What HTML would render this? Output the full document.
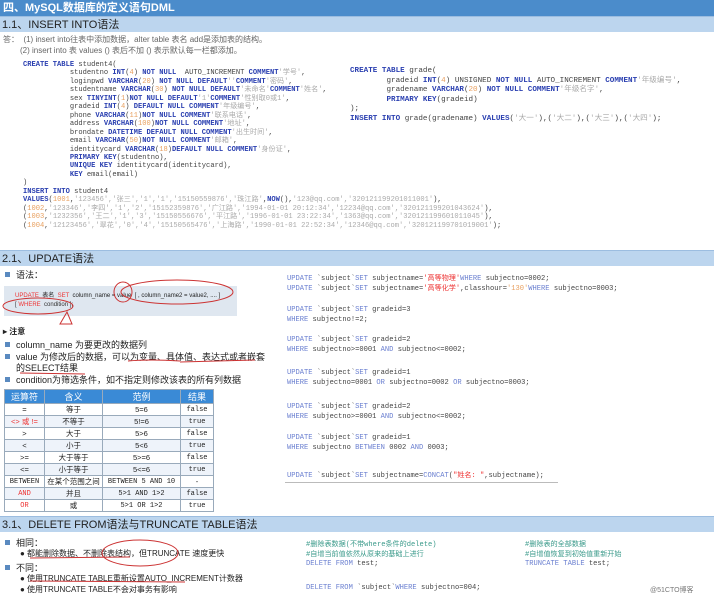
<!DOCTYPE html>
<html><head><meta charset="utf-8"><style>
*{margin:0;padding:0;box-sizing:border-box}
body{width:714px;height:598px;overflow:hidden;background:#fff;position:relative;font-family:"Liberation Sans","Noto Sans CJK SC",sans-serif;color:#222}
.a{position:absolute;white-space:pre}
.h1{position:absolute;left:0;top:0;width:714px;height:16px;background:#4b8ccb;color:#fff;font-weight:bold;font-size:11px;line-height:16px;padding-left:3px}
.bar{position:absolute;left:0;width:714px;height:16px;background:#bcd5ee;font-size:11px;line-height:16px;padding-left:2px;color:#222;border-top:1px solid #9cbde0}
.c{font-family:"Liberation Mono","Noto Sans CJK SC",monospace;font-size:7.1px;color:#444}
.k{color:#2a3fb0;font-weight:bold}
.s{color:#aaa}
.n{color:#e8a060}
.u{color:#6a7fd0}
.r{color:#e33}
.g{color:#3a9a8a}
.note{font-size:8px;color:#666}
.bl{font-size:9px;color:#222}
.sq{display:inline-block;width:5px;height:5px;background:#5a8ac0;margin-right:6px;vertical-align:1px}
table{position:absolute;left:4px;top:389px;border-collapse:collapse;font-size:7.5px;width:210px}
td{height:12px;border:1px solid #9ab;text-align:center;padding:0}
th{height:14px;background:#3a8ad6;color:#fff;font-weight:normal;font-size:9px;border:1px solid #9ab}
tr:nth-child(odd) td{background:#eef3fa}
.m{font-family:"Liberation Mono",monospace;font-size:7px}
</style></head><body>
<div class="h1">四、MySQL数据库的定义语句DML</div>
<div class="bar" style="top:16px">1.1、INSERT INTO语法</div>
<div class="a note" style="left:3px;top:34px">答：  (1) insert into往表中添加数据，alter table 表名 add是添加表的结构。</div>
<div class="a note" style="left:20px;top:45px">(2) insert into 表 values () 表后不加 () 表示默认每一栏都添加。</div>
<div class="a c" style="left:23px;top:61px;line-height:8.45px"><span class="k">CREATE TABLE</span> student4(
           studentno <span class="k">INT</span>(<span class="n">4</span>) <span class="k">NOT NULL</span>  AUTO_INCREMENT <span class="k">COMMENT</span><span class="s">'学号'</span>,
           loginpwd <span class="k">VARCHAR</span>(<span class="n">20</span>) <span class="k">NOT NULL DEFAULT</span><span class="s">''</span><span class="k">COMMENT</span><span class="s">'密码'</span>,
           studentname <span class="k">VARCHAR</span>(<span class="n">30</span>) <span class="k">NOT NULL DEFAULT</span><span class="s">'未命名'</span><span class="k">COMMENT</span><span class="s">'姓名'</span>,
           sex <span class="k">TINYINT</span>(<span class="n">1</span>)<span class="k">NOT NULL DEFAULT</span><span class="s">'1'</span><span class="k">COMMENT</span><span class="s">'性别取0或1'</span>,
           gradeid <span class="k">INT</span>(<span class="n">4</span>) <span class="k">DEFAULT NULL COMMENT</span><span class="s">'年级编号'</span>,
           phone <span class="k">VARCHAR</span>(<span class="n">11</span>)<span class="k">NOT NULL COMMENT</span><span class="s">'联系电话'</span>,
           address <span class="k">VARCHAR</span>(<span class="n">100</span>)<span class="k">NOT NULL COMMENT</span><span class="s">'地址'</span>,
           brondate <span class="k">DATETIME DEFAULT NULL COMMENT</span><span class="s">'出生时间'</span>,
           email <span class="k">VARCHAR</span>(<span class="n">50</span>)<span class="k">NOT NULL COMMENT</span><span class="s">'邮箱'</span>,
           identitycard <span class="k">VARCHAR</span>(<span class="n">18</span>)<span class="k">DEFAULT NULL COMMENT</span><span class="s">'身份证'</span>,
           <span class="k">PRIMARY KEY</span>(studentno),
           <span class="k">UNIQUE KEY</span> identitycard(identitycard),
           <span class="k">KEY</span> email(email)
)
<span class="k">INSERT INTO</span> student4
<span class="k">VALUES</span>(<span class="n">1001</span>,<span class="s">'123456','张三','1','1','15150559876','珠江路'</span>,<span class="k">NOW</span>(),<span class="s">'123@qq.com','320121199201011001'</span>),
(<span class="n">1002</span>,<span class="s">'123346','李四','1','2','15152359876','广江路','1994-01-01 20:12:34','12234@qq.com','320121199201043624'</span>),
(<span class="n">1003</span>,<span class="s">'1232356','王二','1','3','15150556676','平江路','1996-01-01 23:22:34','1363@qq.com','320121199601011045'</span>),
(<span class="n">1004</span>,<span class="s">'12123456','翠花','0','4','15150565476','上海路','1990-01-01 22:52:34','12346@qq.com','320121199701019001'</span>);</div>
<div class="a c" style="left:350px;top:67px;line-height:9.6px;font-size:7.6px"><span class="k">CREATE TABLE</span> grade(
        gradeid <span class="k">INT</span>(<span class="n">4</span>) UNSIGNED <span class="k">NOT NULL</span> AUTO_INCREMENT <span class="k">COMMENT</span><span class="s">'年级编号'</span>,
        gradename <span class="k">VARCHAR</span>(<span class="n">20</span>) <span class="k">NOT NULL COMMENT</span><span class="s">'年级名字'</span>,
        <span class="k">PRIMARY KEY</span>(gradeid)
);
<span class="k">INSERT INTO</span> grade(gradename) <span class="k">VALUES</span>(<span class="s">'大一'</span>),(<span class="s">'大二'</span>),(<span class="s">'大三'</span>),(<span class="s">'大四'</span>);</div>

<div class="bar" style="top:250px">2.1、UPDATE语法</div>
<div class="a bl" style="left:5px;top:268px"><span class="sq"></span>语法：</div>
<div class="a" style="left:4px;top:286px;width:233px;height:30px;background:#dfe7f0"></div>
<div class="a" style="left:15px;top:290px;font-size:6px"><span class="r">UPDATE</span>  表名  <span class="r">SET</span>  column_name = value  [ , column_name2 = value2, .... ]</div>
<div class="a" style="left:15px;top:302px;font-size:6px;color:#333">[ <span class="r">WHERE</span>  condition ];</div>
<svg class="a" style="left:0;top:278px" width="240" height="50"><g fill="none" stroke="#c33" stroke-width="1"><ellipse cx="123" cy="14" rx="9" ry="10"/><ellipse cx="177" cy="14" rx="56" ry="12"/><ellipse cx="38" cy="28" rx="35" ry="8"/><path d="M60 46 L67 34 L72 46 Z"/></g></svg>
<div class="a" style="left:3px;top:326px;font-size:8px;font-weight:bold">▸ 注意</div>
<div class="a bl" style="left:5px;top:338px"><span class="sq"></span>column_name 为要更改的数据列</div>
<div class="a bl" style="left:5px;top:350px"><span class="sq"></span>value 为修改后的数据，可以为变量、具体值、表达式或者嵌套</div>
<div class="a bl" style="left:16px;top:361px">的SELECT结果</div>
<div class="a bl" style="left:5px;top:373px"><span class="sq"></span>condition为筛选条件，如不指定则修改该表的所有列数据</div>
<svg class="a" style="left:0;top:355px" width="270" height="30"><g fill="none" stroke="#c33" stroke-width="1"><path d="M128 6 Q150 4 180 6"/><path d="M180 7 L255 5"/><path d="M20 18 L85 19"/></g></svg>
<table>
<tr><th style="width:40px">运算符</th><th style="width:58px">含义</th><th style="width:78px">范例</th><th>结果</th></tr>
<tr><td>=</td><td>等于</td><td>5=6</td><td class="m">false</td></tr>
<tr><td class="r">&lt;&gt; 或 !=</td><td>不等于</td><td>5!=6</td><td class="m">true</td></tr>
<tr><td>&gt;</td><td>大于</td><td>5&gt;6</td><td class="m">false</td></tr>
<tr><td>&lt;</td><td>小于</td><td>5&lt;6</td><td class="m">true</td></tr>
<tr><td>&gt;=</td><td>大于等于</td><td>5&gt;=6</td><td class="m">false</td></tr>
<tr><td>&lt;=</td><td>小于等于</td><td>5&lt;=6</td><td class="m">true</td></tr>
<tr><td class="m">BETWEEN</td><td>在某个范围之间</td><td class="m">BETWEEN 5 AND 10</td><td>-</td></tr>
<tr><td class="m r">AND</td><td>并且</td><td class="m">5&gt;1 AND 1&gt;2</td><td class="m">false</td></tr>
<tr><td class="m r">OR</td><td>或</td><td class="m">5&gt;1 OR 1&gt;2</td><td class="m">true</td></tr>
</table>
<div class="a c" style="left:287px;top:274px;line-height:10.2px"><span class="u">UPDATE</span> `subject`<span class="u">SET</span> subjectname=<span class="r">'高等物理'</span><span class="u">WHERE</span> subjectno=0002;
<span class="u">UPDATE</span> `subject`<span class="u">SET</span> subjectname=<span class="r">'高等化学'</span>,classhour=<span class="n">'130'</span><span class="u">WHERE</span> subjectno=0003;

<span class="u">UPDATE</span> `subject`<span class="u">SET</span> gradeid=3
<span class="u">WHERE</span> subjectno!=2;

<span class="u">UPDATE</span> `subject`<span class="u">SET</span> gradeid=2
<span class="u">WHERE</span> subjectno&gt;=0001 <span class="u">AND</span> subjectno&lt;=0002;
</div>
<div class="a c" style="left:287px;top:368px;line-height:10.2px"><span class="u">UPDATE</span> `subject`<span class="u">SET</span> gradeid=1
<span class="u">WHERE</span> subjectno=0001 <span class="u">OR</span> subjectno=0002 <span class="u">OR</span> subjectno=0003;</div>
<div class="a c" style="left:287px;top:402px;line-height:10.2px"><span class="u">UPDATE</span> `subject`<span class="u">SET</span> gradeid=2
<span class="u">WHERE</span> subjectno&gt;=0001 <span class="u">AND</span> subjectno&lt;=0002;

<span class="u">UPDATE</span> `subject`<span class="u">SET</span> gradeid=1
<span class="u">WHERE</span> subjectno <span class="u">BETWEEN</span> 0002 <span class="u">AND</span> 0003;</div>
<div class="a c" style="left:287px;top:470px"><span class="u">UPDATE</span> `subject`<span class="u">SET</span> subjectname=<span class="u">CONCAT</span>(<span class="r">"姓名: "</span>,subjectname);</div>
<div class="a" style="left:285px;top:482px;width:273px;height:1px;background:#bbb"></div>

<div class="bar" style="top:516px">3.1、DELETE FROM语法与TRUNCATE TABLE语法</div>
<div class="a bl" style="left:5px;top:536px"><span class="sq"></span>相同：</div>
<div class="a" style="left:20px;top:548px;font-size:8px">● 都能删除数据、不删除表结构，但TRUNCATE 速度更快</div>
<div class="a bl" style="left:5px;top:561px"><span class="sq"></span>不同：</div>
<div class="a" style="left:20px;top:573px;font-size:8px">● 使用TRUNCATE TABLE重新设置AUTO_INCREMENT计数器</div>
<div class="a" style="left:20px;top:584px;font-size:8px">● 使用TRUNCATE TABLE不会对事务有影响</div>
<svg class="a" style="left:0;top:530px" width="300" height="60"><g fill="none" stroke="#c33" stroke-width="1"><ellipse cx="140" cy="23" rx="38" ry="13"/><path d="M30 28 L130 27"/><path d="M30 51 L185 52"/></g></svg>
<div class="a c g" style="left:306px;top:541px;line-height:9.5px">#删除表数据(不带where条件的delete)
#自增当前值依然从原来的基础上进行
<span class="u">DELETE FROM</span> <span style="color:#444">test;</span></div>
<div class="a c" style="left:306px;top:584px"><span class="u">DELETE FROM</span> `subject`<span class="u">WHERE</span> subjectno=004;</div>
<div class="a c g" style="left:525px;top:541px;line-height:9.5px">#删除表的全部数据
#自增值恢复到初始值重新开始
<span class="u">TRUNCATE TABLE</span> <span style="color:#444">test;</span></div>
<div class="a" style="left:650px;top:585px;font-size:7px;color:#777">@51CTO博客</div>
</body></html>
